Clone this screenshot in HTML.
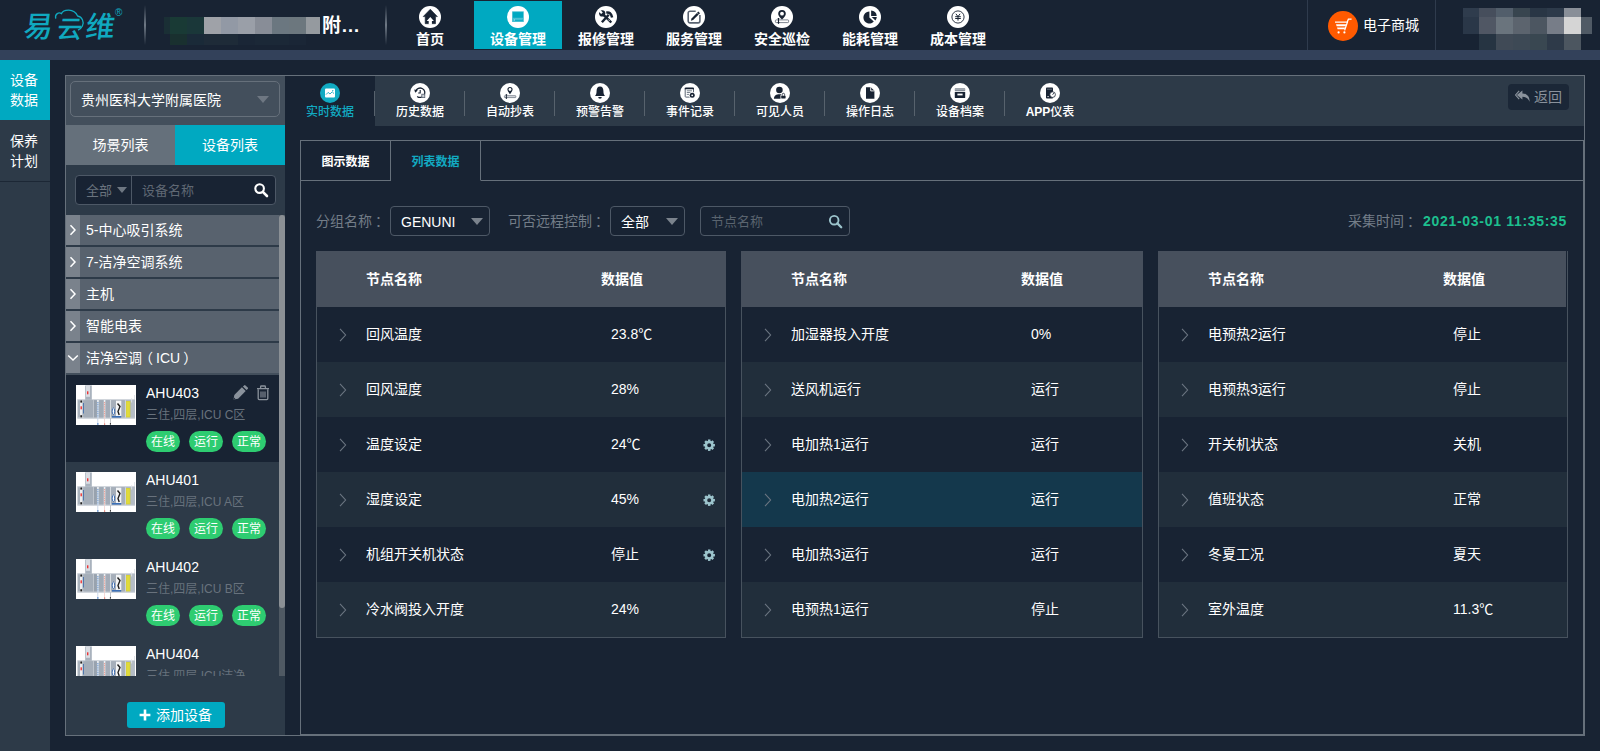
<!DOCTYPE html>
<html lang="zh-CN">
<head>
<meta charset="utf-8">
<title>易云维 - 设备管理</title>
<style>
*{box-sizing:border-box;margin:0;padding:0}
html,body{width:1600px;height:751px;overflow:hidden;background:#182333;}
body{position:relative;font-family:"Liberation Sans","Noto Sans CJK SC",sans-serif;font-size:14px;color:#fff;line-height:1}
.abs{position:absolute}
svg{display:block}
/* header */
#hdr{position:absolute;left:0;top:0;width:1600px;height:50px;background:#182333}
#bar{position:absolute;left:0;top:50px;width:1600px;height:10px;background:#33415a}
.vdiv{position:absolute;top:5px;width:2px;height:40px;background:linear-gradient(to bottom,rgba(90,100,115,0),rgba(120,130,142,.9) 50%,rgba(90,100,115,0))}
.logo{position:absolute;left:25px;top:10px;width:92px;height:32px;color:#10a9c0;font-size:30px;font-weight:500;letter-spacing:-1px;line-height:32px;white-space:nowrap;transform:skewX(-7deg)}
.nav{position:absolute;top:1px;width:88px;height:48px;text-align:center}
.nav.on{background:#00a9c1}
.nav .ic{position:absolute;left:33px;top:5px;width:22px;height:22px;border-radius:50%;background:#fff}
.nav .tx{position:absolute;left:0;top:29px;width:88px;font-size:14px;font-weight:bold;line-height:18px;white-space:nowrap}
.mz{position:absolute}
/* sidebar */
#side{position:absolute;left:0;top:60px;width:50px;height:691px;background:#2d3a48}
.sitem{position:absolute;left:0;width:50px;text-align:center;font-size:14px;line-height:20px;padding-top:10px;padding-right:2px}
/* frame */
#frame{position:absolute;left:65px;top:75px;width:1520px;height:661px;border:1px solid #66707b}

#left{position:absolute;left:66px;top:76px;width:219px;height:659px;background:#2d3a48;overflow:hidden}
#lsel{position:absolute;left:0;top:0;width:219px;height:49px;background:#434f5c}
#lsel .box{position:absolute;left:4px;top:5px;width:210px;height:36px;border:1px solid #66707b;border-radius:5px}
#lsel .t{position:absolute;left:15px;top:15px;font-size:14px;line-height:18px;white-space:nowrap}
.caret{position:absolute;width:0;height:0;border-left:6px solid transparent;border-right:6px solid transparent;border-top:7px solid #6e7782}
.ltab{position:absolute;top:49px;height:40px;width:110px;text-align:center;font-size:14px;line-height:40px}
#lsearch{position:absolute;left:9px;top:99px;width:201px;height:30px;border:1px solid #4d5866;border-radius:4px;background:#182333}
.tree{position:absolute;left:0;width:213px;height:30px;background:#58626e}
.tree .s{position:absolute;left:0;top:0;width:14px;height:30px;background:#7a828c}
.tree .t{position:absolute;left:20px;top:6px;font-size:14px;line-height:18px;white-space:nowrap}
.dev{position:absolute;left:0;width:213px;height:87px}
.dev .th{position:absolute;left:10px;top:10px;width:60px;height:40px;background:#fff}
.dev .n{position:absolute;left:80px;top:9px;font-size:14px;line-height:18px;white-space:nowrap}
.dev .d{position:absolute;left:80px;top:32px;font-size:12px;line-height:16px;color:#68727d;white-space:nowrap}
.bd{position:absolute;top:56px;width:34px;height:21px;border-radius:11px;background:#2ecc71;font-size:12px;line-height:23px;text-align:center;color:#fff}
#addbtn{position:absolute;left:61px;top:626px;width:98px;height:26px;border-radius:3px;background:#00a9c1;font-size:14px;line-height:26px;white-space:nowrap}

#subnav{position:absolute;left:285px;top:76px;width:1299px;height:50px;background:#2d3a48}
.sn{position:absolute;top:0;width:90px;height:50px}
.sn.on{background:#182333}
.sn .ic{position:absolute;left:35px;top:7px;width:20px;height:20px;border-radius:50%;background:#fff}
.sn.on .ic{background:#12aac2}
.sn .tx{position:absolute;left:0;top:28px;width:90px;text-align:center;font-size:12px;font-weight:500;line-height:16px;white-space:nowrap}
.sn.on .tx{color:#12aac2}
.sep{position:absolute;top:15px;width:1px;height:25px;background:#57626d}
#back{position:absolute;left:1223px;top:8px;width:61px;height:26px;border-radius:4px;background:#1b2737;color:#8a929c;font-size:14px;line-height:26px}
#inner{position:absolute;left:300px;top:140px;width:1284px;height:595px;border:1px solid #66707b}
.tab{position:absolute;top:140px;width:91px;height:41px;border:1px solid #66707b;font-size:12px;font-weight:bold;line-height:42px;text-align:center}
.flab{position:absolute;top:212px;font-size:14px;line-height:18px;color:#737d88;white-space:nowrap}
.fsel{position:absolute;top:206px;height:30px;border:1px solid #4d5866;border-radius:4px;font-size:14px;line-height:30px;padding-left:10px;white-space:nowrap}
.tbl{position:absolute;top:251px;height:387px;border:1px solid #47525e;border-top:none}
.tbl .hd{position:absolute;left:-1px;top:0;height:56px;background:#47505d}
.tbl .hd div{position:absolute;top:19px;font-size:14px;font-weight:bold;line-height:18px;white-space:nowrap}
.row{position:absolute;left:0;height:55px}
.row.e{background:#212e3b}
.row.hl{background:#14384c}
.row .n,.row .v{position:absolute;top:18px;font-size:14px;line-height:18px;white-space:nowrap}
.row .a{position:absolute;left:22px;top:20.5px}
.row .g{position:absolute;top:21.500px}

</style>
</head>
<body>
<div id="hdr">
<div class="logo" style="left:24px;top:11px;width:30px;font-size:29px">易</div><div class="logo" style="left:57px;top:15px;width:26px;font-size:25px;line-height:28px">云</div><div class="logo" style="left:86px;top:11px;width:30px;font-size:29px">维</div>
<div class="abs" style="left:115px;top:8px;font-size:10px;color:#10a9c0;line-height:10px">®</div>
<svg class="abs" style="left:50px;top:5px" width="40" height="30" viewBox="50 5 40 30"><path d="M55.700 18.600 C54.600 13.500 59 12 61.500 13.600 C63 9.500 74 7.500 77.600 16 C82 16.500 84.500 22 82.400 26 C81.400 28 80 29.400 78 30.200" fill="none" stroke="#10a9c0" stroke-width="1.300"/></svg>
<div class="vdiv" style="left:144px"></div>
<div class="mz" style="left:164px;top:17px;width:6px;height:17px;background:#1a2f35"></div><div class="mz" style="left:170px;top:17px;width:17px;height:17px;background:#193a35"></div><div class="mz" style="left:187px;top:17px;width:17px;height:17px;background:#1a3739"></div><div class="mz" style="left:204px;top:17px;width:17px;height:17px;background:#9fa2a8"></div><div class="mz" style="left:221px;top:17px;width:17px;height:17px;background:#9299a5"></div><div class="mz" style="left:238px;top:17px;width:17px;height:17px;background:#9a9fa8"></div><div class="mz" style="left:255px;top:17px;width:17px;height:17px;background:#888d97"></div><div class="mz" style="left:272px;top:17px;width:17px;height:17px;background:#6b7780"></div><div class="mz" style="left:289px;top:17px;width:17px;height:17px;background:#6c777e"></div><div class="mz" style="left:306px;top:17px;width:14px;height:17px;background:#959a9f"></div><div class="mz" style="left:170px;top:34px;width:17px;height:11px;background:#19302f"></div><div class="mz" style="left:187px;top:34px;width:17px;height:11px;background:#1a2a38"></div><div class="mz" style="left:204px;top:34px;width:34px;height:11px;background:#1e2b38"></div><div class="mz" style="left:238px;top:34px;width:17px;height:11px;background:#1a2636"></div><div class="mz" style="left:255px;top:34px;width:34px;height:11px;background:#1b2837"></div><div class="mz" style="left:289px;top:34px;width:17px;height:11px;background:#1a2636"></div>
<div class="abs" style="left:322px;top:15px;font-size:19px;font-weight:bold;line-height:22px;white-space:nowrap">附…</div>
<div class="vdiv" style="left:385px"></div>
<div class="nav" style="left:386px"><div class="ic"><svg width="22" height="22" viewBox="0 0 22 22"><path d="M11.300 3.200 L4.200 10.600 H6.200 V17.700 H16.500 V10.600 H18.400 Z" fill="#182333" stroke="#182333" stroke-width=".6" stroke-linejoin="round"/><path d="M11.300 10.900 L7.700 14.900 H9.700 V18.400 H12.900 V14.900 H14.900 Z" fill="#fff"/></svg></div><div class="tx">首页</div></div>
<div class="nav on" style="left:474px"><div class="ic"><svg width="22" height="22" viewBox="0 0 22 22"><rect x="5" y="5.200" width="11.900" height="10.700" rx=".5" fill="#56c4d5"/><rect x="5.900" y="6.100" width="10.100" height="5.700" fill="#00a9c1"/><rect x="5.900" y="12.800" width="10.100" height="2.400" fill="#12aec5"/><rect x="6.700" y="13.200" width=".9" height="1.500" fill="#e6f7fa"/><path d="M8 13.300 H15.600" stroke="#8ad6e2" stroke-width=".5"/></svg></div><div class="tx">设备管理</div></div>
<div class="nav" style="left:562px"><div class="ic"><svg width="22" height="22" viewBox="0 0 22 22"><circle cx="7.200" cy="7.400" r="3.100" fill="#182333"/><path d="M3.400 3.600 L7 7.200" stroke="#fff" stroke-width="2.300"/><g stroke="#182333" fill="none"><path d="M8.600 8.800 L16.300 16.500" stroke-width="2.400"/><path d="M6.900 16.300 L13.700 8.700" stroke-width="2.400"/><path d="M11.300 6.700 Q15.800 5.400 17.100 11.500" stroke-width="2.500"/></g><path d="M13.200 13.400 L14.800 15" stroke="#fff" stroke-width=".7"/></svg></div><div class="tx">报修管理</div></div>
<div class="nav" style="left:650px"><div class="ic"><svg width="22" height="22" viewBox="0 0 22 22"><path d="M12.700 5.200 H7 a1.800 1.800 0 0 0 -1.800 1.800 V15.100 a1.800 1.800 0 0 0 1.800 1.800 H15.100 a1.800 1.800 0 0 0 1.800 -1.800 V8.900" fill="none" stroke="#5a6472" stroke-width="1.600"/><path d="M7.900 14.700 L8.500 12.500 L15.400 5.600 L17 7.200 L10.100 14.100 Z" fill="#182333"/><path d="M14 6.800 L15.800 8.600" stroke="#fff" stroke-width=".5"/></svg></div><div class="tx">服务管理</div></div>
<div class="nav" style="left:738px"><div class="ic"><svg width="22" height="22" viewBox="0 0 22 22"><rect x="4.400" y="13.900" width="13.200" height="2.700" rx=".8" fill="#fff" stroke="#5a6472" stroke-width=".8"/><path d="M11 4.100 A3.800 3.800 0 0 1 14.800 7.900 C14.800 9.700 12.800 11.600 11 13.500 C9.200 11.600 7.200 9.700 7.200 7.900 A3.800 3.800 0 0 1 11 4.100 Z" fill="#182333"/><circle cx="11" cy="7.700" r="1.900" fill="#fff"/><path d="M7.500 12.600 V17.400" stroke="#182333" stroke-width="1.100"/><path d="M6.300 12 H8.700 L7.500 13.500 Z M6.200 16.500 H8.800 L7.500 18 Z" fill="#182333"/></svg></div><div class="tx">安全巡检</div></div>
<div class="nav" style="left:826px"><div class="ic"><svg width="22" height="22" viewBox="0 0 22 22"><path d="M10.400 5.500 A6 6 0 1 0 14.800 15.600 L10.400 11.500 Z" fill="#182333"/><path d="M12.100 4.400 A5.600 5.600 0 0 1 17.700 9.900 H12.100 Z" fill="#182333"/><path d="M12.700 11.100 H17.800 A5.600 5.600 0 0 1 16.400 14.500 Z" fill="#182333"/></svg></div><div class="tx">能耗管理</div></div>
<div class="nav" style="left:914px"><div class="ic"><svg width="22" height="22" viewBox="0 0 22 22"><circle cx="11" cy="11" r="6.1" fill="none" stroke="#182333" stroke-width=".9"/><path d="M8.9 7.8 L11 10.6 L13.1 7.8 M8.2 10.7 H13.8 M8.2 12.5 H13.8 M11 10.6 V14.6" fill="none" stroke="#182333" stroke-width="1"/></svg></div><div class="tx">成本管理</div></div>
<div class="abs" style="left:1307px;top:0;width:1px;height:50px;background:#2f3b4d"></div>
<div class="abs" style="left:1435px;top:0;width:1px;height:50px;background:#2f3b4d"></div>
<div class="abs" style="left:1328px;top:11px;width:30px;height:30px;border-radius:50%;background:#ff5a00"><svg width="30" height="30" viewBox="0 0 30 30"><path d="M7 11.2 H19.2 L20.4 8.2 H23.6" fill="none" stroke="#fff" stroke-width="1.3"/><path d="M8 13.2 H18.4 L17.6 15.2 H8.6 Z M9 16.6 H17.2 L16.6 18.2 H9.6 Z" fill="#fff"/><path d="M19.6 10.6 L16.6 19.4" stroke="#fff" stroke-width="1.3"/><circle cx="10.6" cy="21.4" r="1.1" fill="#fff"/><circle cx="16.4" cy="21.4" r="1.1" fill="#fff"/></svg></div>
<div class="abs" style="left:1363px;top:16px;font-size:14px;line-height:18px;white-space:nowrap">电子商城</div>
<div class="mz" style="left:1463px;top:8px;width:16px;height:9px;background:#2f3c4d"></div><div class="mz" style="left:1479px;top:8px;width:17px;height:9px;background:#464e5c"></div><div class="mz" style="left:1496px;top:8px;width:17px;height:9px;background:#525e6b"></div><div class="mz" style="left:1513px;top:8px;width:17px;height:9px;background:#38454f"></div><div class="mz" style="left:1530px;top:8px;width:17px;height:9px;background:#293645"></div><div class="mz" style="left:1547px;top:8px;width:17px;height:9px;background:#2d3a4a"></div><div class="mz" style="left:1564px;top:8px;width:17px;height:9px;background:#898f98"></div><div class="mz" style="left:1463px;top:17px;width:16px;height:17px;background:#2a3748"></div><div class="mz" style="left:1479px;top:17px;width:17px;height:17px;background:#505764"></div><div class="mz" style="left:1496px;top:17px;width:17px;height:17px;background:#6a747d"></div><div class="mz" style="left:1513px;top:17px;width:17px;height:17px;background:#5c646e"></div><div class="mz" style="left:1530px;top:17px;width:17px;height:17px;background:#4c5661"></div><div class="mz" style="left:1547px;top:17px;width:17px;height:17px;background:#777d88"></div><div class="mz" style="left:1564px;top:17px;width:17px;height:17px;background:#d5d5d5"></div><div class="mz" style="left:1581px;top:17px;width:11px;height:17px;background:#505a65"></div><div class="mz" style="left:1479px;top:34px;width:17px;height:16px;background:#263442"></div><div class="mz" style="left:1496px;top:34px;width:17px;height:16px;background:#404a56"></div><div class="mz" style="left:1513px;top:34px;width:17px;height:16px;background:#3d4955"></div><div class="mz" style="left:1530px;top:34px;width:17px;height:16px;background:#394751"></div><div class="mz" style="left:1547px;top:34px;width:17px;height:16px;background:#2e3a49"></div><div class="mz" style="left:1564px;top:34px;width:17px;height:16px;background:#4c5660"></div>
</div>
<div id="bar"></div>
<div id="side">
<div class="sitem" style="top:0;height:60px;background:#00a9c1">设备<br>数据</div>
<div class="sitem" style="top:60px;height:62px;padding-top:11px;border-bottom:1px solid #1c2735">保养<br>计划</div>
</div>
<div id="frame"></div>
<div id="left">
<div id="lsel"><div class="box"></div><div class="t">贵州医科大学附属医院</div><div class="caret" style="left:191px;top:20px"></div></div>
<div class="ltab" style="left:0;width:109px;background:#65707b">场景列表</div><div class="ltab" style="left:109px;background:#00a9c1">设备列表</div>
<div id="lsearch"><div class="abs" style="left:10px;top:6px;font-size:13px;line-height:18px;color:#6a737e">全部</div><div class="caret" style="left:41px;top:11px;border-left-width:5px;border-right-width:5px;border-top-width:6px"></div><div class="abs" style="left:55px;top:0;width:1px;height:28px;background:#4d5866"></div><div class="abs" style="left:66px;top:6px;font-size:13px;line-height:18px;color:#5f6873">设备名称</div><svg class="abs" style="left:177px;top:6px" width="16" height="16" viewBox="0 0 16 16"><circle cx="6.6" cy="6.6" r="4.3" fill="none" stroke="#fff" stroke-width="2.1"/><path d="M9.8 9.8 L14 14" stroke="#fff" stroke-width="2.6" stroke-linecap="round"/></svg></div>
<div class="tree" style="top:139px"><div class="s"></div><svg class="abs" style="left:3px;top:9px" width="8" height="12" viewBox="0 0 8 12"><path d="M1.5 1.2 L6 6 L1.5 10.8" fill="none" stroke="#fff" stroke-width="1.5"/></svg><div class="t">5-中心吸引系统</div></div>
<div class="tree" style="top:171px"><div class="s"></div><svg class="abs" style="left:3px;top:9px" width="8" height="12" viewBox="0 0 8 12"><path d="M1.5 1.2 L6 6 L1.5 10.8" fill="none" stroke="#fff" stroke-width="1.5"/></svg><div class="t">7-洁净空调系统</div></div>
<div class="tree" style="top:203px"><div class="s"></div><svg class="abs" style="left:3px;top:9px" width="8" height="12" viewBox="0 0 8 12"><path d="M1.5 1.2 L6 6 L1.5 10.8" fill="none" stroke="#fff" stroke-width="1.5"/></svg><div class="t">主机</div></div>
<div class="tree" style="top:235px"><div class="s"></div><svg class="abs" style="left:3px;top:9px" width="8" height="12" viewBox="0 0 8 12"><path d="M1.5 1.2 L6 6 L1.5 10.8" fill="none" stroke="#fff" stroke-width="1.5"/></svg><div class="t">智能电表</div></div>
<div class="tree" style="top:267px"><div class="s"></div><svg class="abs" style="left:1px;top:11px" width="12" height="8" viewBox="0 0 12 8"><path d="M1.2 1.5 L6 6 L10.8 1.5" fill="none" stroke="#fff" stroke-width="1.5"/></svg><div class="t">洁净空调<span style="position:relative;left:-3px">（</span>ICU<span style="position:relative;left:3px">）</span></div></div>
<div class="abs" style="left:0;top:297px;width:213px;height:2px;background:#434f5c"></div>
<div class="abs" style="left:0;top:299px;width:213px;height:301px;overflow:hidden">
<div class="dev" style="top:0px;background:#182333;"><div class="th"><svg width="60" height="40" viewBox="0 0 60 40"><rect width="60" height="40" fill="#fff"/>
<rect x="1.500" y="14.400" width="57.500" height="19" fill="#a9b2bc"/><rect x="1.500" y="14.200" width="57.500" height="1" fill="#d3d8de"/><rect x="1.500" y="32.400" width="57.500" height="1.300" fill="#cdd3da"/>
<rect x="9.200" y=".4" width="6.600" height="14.400" fill="#a9b2bd"/><rect x="10" y=".4" width="4" height="11.400" fill="#d9dde3"/><rect x="11" y="6.300" width="1.400" height="3" fill="#e33"/>
<rect x="4" y="15" width="2.400" height="17.600" fill="#eceef1"/><rect x="4.300" y="15.400" width="1.800" height="2.200" fill="#222"/><rect x="4.300" y="30.200" width="1.800" height="2.200" fill="#222"/><rect x="4.500" y="21.300" width="1.400" height="3" fill="#e33"/>
<rect x="7.200" y="18" width=".8" height="10.500" fill="#3b67a8"/>
<rect x="8.200" y="15.200" width="9" height="17.200" fill="#a5aeb9"/><rect x="17.300" y="15.200" width=".7" height="17.200" fill="#c9cfd6"/><rect x="18" y="15.200" width="2.800" height="17.200" fill="#98a2ae"/>
<rect x="21" y="15" width="1.800" height="18.400" fill="#e6eaee"/><path d="M21.900 17 V32.500" stroke="#3f78c4" stroke-width=".8" stroke-dasharray="1.200 .6"/><rect x="21.500" y="33.400" width=".7" height="6" fill="#b4c6e2"/><rect x="21.200" y="38.300" width="1.300" height="1.400" fill="#3f78c4"/>
<rect x="23.200" y="15.200" width="4.400" height="17.200" fill="#a1abb6"/>
<rect x="27.800" y="15" width="1.600" height="18.400" fill="#eceff2"/><path d="M28.600 17 V32.500" stroke="#e8867a" stroke-width=".8" stroke-dasharray="1.200 .6"/><rect x="28.300" y="33.400" width=".6" height="6" fill="#f0c0ba"/><rect x="28" y="38.500" width="1.200" height="1.200" fill="#e06a5c"/>
<rect x="29.800" y="15.200" width="4" height="17.200" fill="#a3acb8"/><rect x="34" y="15" width=".8" height="18.400" fill="#e2e6ea"/><rect x="34.100" y="33.400" width=".6" height="6" fill="#9aa0a8"/><rect x="33.900" y="38" width="1" height="1.700" fill="#333"/>
<rect x="35.200" y="15.200" width="13.400" height="17.200" fill="#a6afba"/>
<rect x="40" y="15.700" width="5.300" height="15.300" fill="#f4f5f6"/><path d="M41.500 18.500 L44 21.500 L42 26.500 L43.200 30" stroke="#222" stroke-width="1.400" fill="none"/>
<ellipse cx="37.400" cy="26.300" rx="1.200" ry="3.300" fill="#fff" stroke="#2f62ad" stroke-width=".9"/><rect x="36" y="31" width="9.200" height="1.600" fill="#3b6fb6"/>
<rect x="49" y="15.200" width=".9" height="17.200" fill="#d3d8de"/>
<rect x="50" y="16" width="4.400" height="16.400" fill="#d6d13a"/><rect x="50.600" y="17" width="3" height="14.400" fill="#e0da3c"/>
<rect x="54.800" y="15.200" width="4.200" height="17.200" fill="#b4bcc5"/><rect x="55.300" y="13" width=".8" height="4.500" fill="#e4e7eb"/><rect x="58.200" y="10" width=".5" height="5" fill="#c5cbd2"/>
</svg></div><div class="n">AHU403</div><div class="d">三住,四层,ICU C区</div><svg class="abs" style="left:167px;top:10px" width="16" height="15" viewBox="0 0 16 15"><path d="M.5 14.500 L1.300 9.900 L8.900 2.300 L12.700 6.100 L5.100 13.700 Z" fill="#8a929c"/><path d="M9.900 1.500 L11.100 .4 a1 1 0 0 1 1.400 0 L14.700 2.500 a1 1 0 0 1 0 1.400 L13.500 5.100 Z" fill="#8a929c"/><path d="M.5 14.500 L2.500 14 L1 12.500 Z" fill="#182333"/></svg><svg class="abs" style="left:190px;top:10px" width="14" height="16" viewBox="0 0 14 16"><path d="M1 3.6 H13 M4.6 3.4 V1.8 a.8 .8 0 0 1 .8 -.8 H8.6 a.8 .8 0 0 1 .8 .8 V3.4" fill="none" stroke="#8a929c" stroke-width="1.3"/><path d="M2.2 4.2 V13.6 a1 1 0 0 0 1 1 H10.8 a1 1 0 0 0 1 -1 V4.2" fill="none" stroke="#8a929c" stroke-width="1.3"/><path d="M5 6.4 V12.4 M7 6.4 V12.4 M9 6.4 V12.4" stroke="#8a929c" stroke-width="1.1"/></svg><div class="bd" style="left:80px">在线</div><div class="bd" style="left:123px">运行</div><div class="bd" style="left:166px">正常</div></div>
<div class="dev" style="top:87px;"><div class="th"><svg width="60" height="40" viewBox="0 0 60 40"><rect width="60" height="40" fill="#fff"/>
<rect x="1.500" y="14.400" width="57.500" height="19" fill="#a9b2bc"/><rect x="1.500" y="14.200" width="57.500" height="1" fill="#d3d8de"/><rect x="1.500" y="32.400" width="57.500" height="1.300" fill="#cdd3da"/>
<rect x="9.200" y=".4" width="6.600" height="14.400" fill="#a9b2bd"/><rect x="10" y=".4" width="4" height="11.400" fill="#d9dde3"/><rect x="11" y="6.300" width="1.400" height="3" fill="#e33"/>
<rect x="4" y="15" width="2.400" height="17.600" fill="#eceef1"/><rect x="4.300" y="15.400" width="1.800" height="2.200" fill="#222"/><rect x="4.300" y="30.200" width="1.800" height="2.200" fill="#222"/><rect x="4.500" y="21.300" width="1.400" height="3" fill="#e33"/>
<rect x="7.200" y="18" width=".8" height="10.500" fill="#3b67a8"/>
<rect x="8.200" y="15.200" width="9" height="17.200" fill="#a5aeb9"/><rect x="17.300" y="15.200" width=".7" height="17.200" fill="#c9cfd6"/><rect x="18" y="15.200" width="2.800" height="17.200" fill="#98a2ae"/>
<rect x="21" y="15" width="1.800" height="18.400" fill="#e6eaee"/><path d="M21.900 17 V32.500" stroke="#3f78c4" stroke-width=".8" stroke-dasharray="1.200 .6"/><rect x="21.500" y="33.400" width=".7" height="6" fill="#b4c6e2"/><rect x="21.200" y="38.300" width="1.300" height="1.400" fill="#3f78c4"/>
<rect x="23.200" y="15.200" width="4.400" height="17.200" fill="#a1abb6"/>
<rect x="27.800" y="15" width="1.600" height="18.400" fill="#eceff2"/><path d="M28.600 17 V32.500" stroke="#e8867a" stroke-width=".8" stroke-dasharray="1.200 .6"/><rect x="28.300" y="33.400" width=".6" height="6" fill="#f0c0ba"/><rect x="28" y="38.500" width="1.200" height="1.200" fill="#e06a5c"/>
<rect x="29.800" y="15.200" width="4" height="17.200" fill="#a3acb8"/><rect x="34" y="15" width=".8" height="18.400" fill="#e2e6ea"/><rect x="34.100" y="33.400" width=".6" height="6" fill="#9aa0a8"/><rect x="33.900" y="38" width="1" height="1.700" fill="#333"/>
<rect x="35.200" y="15.200" width="13.400" height="17.200" fill="#a6afba"/>
<rect x="40" y="15.700" width="5.300" height="15.300" fill="#f4f5f6"/><path d="M41.500 18.500 L44 21.500 L42 26.500 L43.200 30" stroke="#222" stroke-width="1.400" fill="none"/>
<ellipse cx="37.400" cy="26.300" rx="1.200" ry="3.300" fill="#fff" stroke="#2f62ad" stroke-width=".9"/><rect x="36" y="31" width="9.200" height="1.600" fill="#3b6fb6"/>
<rect x="49" y="15.200" width=".9" height="17.200" fill="#d3d8de"/>
<rect x="50" y="16" width="4.400" height="16.400" fill="#d6d13a"/><rect x="50.600" y="17" width="3" height="14.400" fill="#e0da3c"/>
<rect x="54.800" y="15.200" width="4.200" height="17.200" fill="#b4bcc5"/><rect x="55.300" y="13" width=".8" height="4.500" fill="#e4e7eb"/><rect x="58.200" y="10" width=".5" height="5" fill="#c5cbd2"/>
</svg></div><div class="n">AHU401</div><div class="d">三住,四层,ICU A区</div><div class="bd" style="left:80px">在线</div><div class="bd" style="left:123px">运行</div><div class="bd" style="left:166px">正常</div></div>
<div class="dev" style="top:174px;"><div class="th"><svg width="60" height="40" viewBox="0 0 60 40"><rect width="60" height="40" fill="#fff"/>
<rect x="1.500" y="14.400" width="57.500" height="19" fill="#a9b2bc"/><rect x="1.500" y="14.200" width="57.500" height="1" fill="#d3d8de"/><rect x="1.500" y="32.400" width="57.500" height="1.300" fill="#cdd3da"/>
<rect x="9.200" y=".4" width="6.600" height="14.400" fill="#a9b2bd"/><rect x="10" y=".4" width="4" height="11.400" fill="#d9dde3"/><rect x="11" y="6.300" width="1.400" height="3" fill="#e33"/>
<rect x="4" y="15" width="2.400" height="17.600" fill="#eceef1"/><rect x="4.300" y="15.400" width="1.800" height="2.200" fill="#222"/><rect x="4.300" y="30.200" width="1.800" height="2.200" fill="#222"/><rect x="4.500" y="21.300" width="1.400" height="3" fill="#e33"/>
<rect x="7.200" y="18" width=".8" height="10.500" fill="#3b67a8"/>
<rect x="8.200" y="15.200" width="9" height="17.200" fill="#a5aeb9"/><rect x="17.300" y="15.200" width=".7" height="17.200" fill="#c9cfd6"/><rect x="18" y="15.200" width="2.800" height="17.200" fill="#98a2ae"/>
<rect x="21" y="15" width="1.800" height="18.400" fill="#e6eaee"/><path d="M21.900 17 V32.500" stroke="#3f78c4" stroke-width=".8" stroke-dasharray="1.200 .6"/><rect x="21.500" y="33.400" width=".7" height="6" fill="#b4c6e2"/><rect x="21.200" y="38.300" width="1.300" height="1.400" fill="#3f78c4"/>
<rect x="23.200" y="15.200" width="4.400" height="17.200" fill="#a1abb6"/>
<rect x="27.800" y="15" width="1.600" height="18.400" fill="#eceff2"/><path d="M28.600 17 V32.500" stroke="#e8867a" stroke-width=".8" stroke-dasharray="1.200 .6"/><rect x="28.300" y="33.400" width=".6" height="6" fill="#f0c0ba"/><rect x="28" y="38.500" width="1.200" height="1.200" fill="#e06a5c"/>
<rect x="29.800" y="15.200" width="4" height="17.200" fill="#a3acb8"/><rect x="34" y="15" width=".8" height="18.400" fill="#e2e6ea"/><rect x="34.100" y="33.400" width=".6" height="6" fill="#9aa0a8"/><rect x="33.900" y="38" width="1" height="1.700" fill="#333"/>
<rect x="35.200" y="15.200" width="13.400" height="17.200" fill="#a6afba"/>
<rect x="40" y="15.700" width="5.300" height="15.300" fill="#f4f5f6"/><path d="M41.500 18.500 L44 21.500 L42 26.500 L43.200 30" stroke="#222" stroke-width="1.400" fill="none"/>
<ellipse cx="37.400" cy="26.300" rx="1.200" ry="3.300" fill="#fff" stroke="#2f62ad" stroke-width=".9"/><rect x="36" y="31" width="9.200" height="1.600" fill="#3b6fb6"/>
<rect x="49" y="15.200" width=".9" height="17.200" fill="#d3d8de"/>
<rect x="50" y="16" width="4.400" height="16.400" fill="#d6d13a"/><rect x="50.600" y="17" width="3" height="14.400" fill="#e0da3c"/>
<rect x="54.800" y="15.200" width="4.200" height="17.200" fill="#b4bcc5"/><rect x="55.300" y="13" width=".8" height="4.500" fill="#e4e7eb"/><rect x="58.200" y="10" width=".5" height="5" fill="#c5cbd2"/>
</svg></div><div class="n">AHU402</div><div class="d">三住,四层,ICU B区</div><div class="bd" style="left:80px">在线</div><div class="bd" style="left:123px">运行</div><div class="bd" style="left:166px">正常</div></div>
<div class="dev" style="top:261px;"><div class="th"><svg width="60" height="40" viewBox="0 0 60 40"><rect width="60" height="40" fill="#fff"/>
<rect x="1.500" y="14.400" width="57.500" height="19" fill="#a9b2bc"/><rect x="1.500" y="14.200" width="57.500" height="1" fill="#d3d8de"/><rect x="1.500" y="32.400" width="57.500" height="1.300" fill="#cdd3da"/>
<rect x="9.200" y=".4" width="6.600" height="14.400" fill="#a9b2bd"/><rect x="10" y=".4" width="4" height="11.400" fill="#d9dde3"/><rect x="11" y="6.300" width="1.400" height="3" fill="#e33"/>
<rect x="4" y="15" width="2.400" height="17.600" fill="#eceef1"/><rect x="4.300" y="15.400" width="1.800" height="2.200" fill="#222"/><rect x="4.300" y="30.200" width="1.800" height="2.200" fill="#222"/><rect x="4.500" y="21.300" width="1.400" height="3" fill="#e33"/>
<rect x="7.200" y="18" width=".8" height="10.500" fill="#3b67a8"/>
<rect x="8.200" y="15.200" width="9" height="17.200" fill="#a5aeb9"/><rect x="17.300" y="15.200" width=".7" height="17.200" fill="#c9cfd6"/><rect x="18" y="15.200" width="2.800" height="17.200" fill="#98a2ae"/>
<rect x="21" y="15" width="1.800" height="18.400" fill="#e6eaee"/><path d="M21.900 17 V32.500" stroke="#3f78c4" stroke-width=".8" stroke-dasharray="1.200 .6"/><rect x="21.500" y="33.400" width=".7" height="6" fill="#b4c6e2"/><rect x="21.200" y="38.300" width="1.300" height="1.400" fill="#3f78c4"/>
<rect x="23.200" y="15.200" width="4.400" height="17.200" fill="#a1abb6"/>
<rect x="27.800" y="15" width="1.600" height="18.400" fill="#eceff2"/><path d="M28.600 17 V32.500" stroke="#e8867a" stroke-width=".8" stroke-dasharray="1.200 .6"/><rect x="28.300" y="33.400" width=".6" height="6" fill="#f0c0ba"/><rect x="28" y="38.500" width="1.200" height="1.200" fill="#e06a5c"/>
<rect x="29.800" y="15.200" width="4" height="17.200" fill="#a3acb8"/><rect x="34" y="15" width=".8" height="18.400" fill="#e2e6ea"/><rect x="34.100" y="33.400" width=".6" height="6" fill="#9aa0a8"/><rect x="33.900" y="38" width="1" height="1.700" fill="#333"/>
<rect x="35.200" y="15.200" width="13.400" height="17.200" fill="#a6afba"/>
<rect x="40" y="15.700" width="5.300" height="15.300" fill="#f4f5f6"/><path d="M41.500 18.500 L44 21.500 L42 26.500 L43.200 30" stroke="#222" stroke-width="1.400" fill="none"/>
<ellipse cx="37.400" cy="26.300" rx="1.200" ry="3.300" fill="#fff" stroke="#2f62ad" stroke-width=".9"/><rect x="36" y="31" width="9.200" height="1.600" fill="#3b6fb6"/>
<rect x="49" y="15.200" width=".9" height="17.200" fill="#d3d8de"/>
<rect x="50" y="16" width="4.400" height="16.400" fill="#d6d13a"/><rect x="50.600" y="17" width="3" height="14.400" fill="#e0da3c"/>
<rect x="54.800" y="15.200" width="4.200" height="17.200" fill="#b4bcc5"/><rect x="55.300" y="13" width=".8" height="4.500" fill="#e4e7eb"/><rect x="58.200" y="10" width=".5" height="5" fill="#c5cbd2"/>
</svg></div><div class="n">AHU404</div><div class="d">三住,四层,ICU洁净</div><div class="bd" style="left:80px">在线</div><div class="bd" style="left:123px">运行</div><div class="bd" style="left:166px">正常</div></div>
</div>
<div class="abs" style="left:213px;top:139px;width:6px;height:461px;background:#4f5963"></div><div class="abs" style="left:213px;top:139px;width:6px;height:393px;background:#8b9095;border-radius:3px"></div>
<div id="addbtn"><svg class="abs" style="left:12px;top:7px" width="12" height="12" viewBox="0 0 12 12"><path d="M6 .6 V11.4 M.6 6 H11.4" stroke="#fff" stroke-width="2.6"/></svg><span class="abs" style="left:29px;top:0">添加设备</span></div>
</div>
<div id="subnav">
<div class="sn on" style="left:0px"><div class="ic"><svg width="20" height="20" viewBox="0 0 20 20"><rect x="5" y="5.6" width="10" height="8.8" rx="1" fill="#fff"/><path d="M6 11.6 L8.2 9.4 L10 11 L12.2 8.8 L14 10.6" fill="none" stroke="#12aac2" stroke-width=".9"/><circle cx="12.8" cy="7.6" r=".7" fill="#12aac2"/></svg></div><div class="tx">实时数据</div></div><div class="sep" style="left:89px"></div>
<div class="sn" style="left:90px"><div class="ic"><svg width="20" height="20" viewBox="0 0 20 20"><path d="M5.700 8.200 A4.700 4.700 0 1 1 7.200 13.400" fill="none" stroke="#182333" stroke-width="1.300"/><path d="M4.200 6.400 L7.800 7.200 L5.200 9.800 Z" fill="#182333"/><path d="M10.200 7 V10 H8.200" fill="none" stroke="#182333" stroke-width="1.100"/><rect x="11.800" y="11.200" width="3" height="3.400" fill="#c9ced4" stroke="#5a6472" stroke-width=".8"/></svg></div><div class="tx">历史数据</div></div><div class="sep" style="left:179px"></div>
<div class="sn" style="left:180px"><div class="ic"><svg width="20" height="20" viewBox="0 0 20 20"><rect x="4.400" y="12.700" width="11.400" height="1.900" rx=".5" fill="#dfe2e6" stroke="#5a6472" stroke-width=".7"/><path d="M10 4 A2.600 2.600 0 0 1 12.600 6.600 C12.600 8 11.200 9.600 10 11.200 C8.800 9.600 7.400 8 7.400 6.600 A2.600 2.600 0 0 1 10 4 Z" fill="#182333"/><circle cx="10" cy="6.500" r="1.400" fill="#fff"/><path d="M6.400 11.600 V15.600" stroke="#182333" stroke-width=".9"/><path d="M5.400 11.200 H7.400 L6.400 12.500 Z M5.400 14.800 H7.400 L6.400 16 Z" fill="#182333"/></svg></div><div class="tx">自动抄表</div></div><div class="sep" style="left:269px"></div>
<div class="sn" style="left:270px"><div class="ic"><svg width="20" height="20" viewBox="0 0 20 20"><path d="M10 3.400 c-2.400 0 -3.400 2 -3.400 4.400 c0 2.600 -.5 4 -1.600 5.200 H15 c-1.100 -1.200 -1.600 -2.600 -1.600 -5.200 c0 -2.400 -1 -4.400 -3.400 -4.400 z" fill="#182333"/><path d="M8.2 14 a1.800 1.800 0 0 0 3.600 0 z" fill="#182333"/></svg></div><div class="tx">预警告警</div></div><div class="sep" style="left:359px"></div>
<div class="sn" style="left:360px"><div class="ic"><svg width="20" height="20" viewBox="0 0 20 20"><rect x="5.200" y="5" width="8.300" height="9.100" rx=".6" fill="#fff" stroke="#5a6472" stroke-width="1"/><path d="M4.800 5.500 H13.900" stroke="#182333" stroke-width="1.500"/><path d="M6.800 7.800 H12 M6.800 9.500 H11.400 M6.800 11.400 H9.400" stroke="#6a7480" stroke-width=".9"/><circle cx="12.200" cy="12.300" r="3.200" fill="#fff"/><circle cx="12.200" cy="12.300" r="2.500" fill="#182333"/><circle cx="12.200" cy="12.300" r=".9" fill="#fff"/></svg></div><div class="tx">事件记录</div></div><div class="sep" style="left:449px"></div>
<div class="sn" style="left:450px"><div class="ic"><svg width="20" height="20" viewBox="0 0 20 20"><circle cx="9.400" cy="7" r="3.300" fill="#182333"/><path d="M3.900 15.800 c0 -3.200 2.400 -4.600 5.500 -4.600 s5.500 1.400 5.500 4.600 z" fill="#182333"/><rect x="10.500" y="12" width="5.700" height="4.100" fill="#fff"/><path d="M12.200 12.800 V11.500 a1.200 1.200 0 0 1 2.400 0 V12.800" fill="none" stroke="#fff" stroke-width="2.200"/><path d="M12.200 12.800 V11.500 a1.200 1.200 0 0 1 2.400 0 V12.800" fill="none" stroke="#182333" stroke-width=".8"/><rect x="11.200" y="12.700" width="4.400" height="2.800" rx=".4" fill="#182333"/></svg></div><div class="tx">可见人员</div></div><div class="sep" style="left:539px"></div>
<div class="sn" style="left:540px"><div class="ic"><svg width="20" height="20" viewBox="0 0 20 20"><path d="M6 4.200 H10.800 L14.400 7.800 V15.800 H6 Z" fill="#182333"/><path d="M10.700 4.200 V7.900 H14.400" fill="none" stroke="#fff" stroke-width=".9"/></svg></div><div class="tx">操作日志</div></div><div class="sep" style="left:629px"></div>
<div class="sn" style="left:630px"><div class="ic"><svg width="20" height="20" viewBox="0 0 20 20"><rect x="4.800" y="5.200" width="10.400" height="3" rx=".6" fill="#7d8691"/><path d="M4.800 6.700 H15.200" stroke="#d5d9de" stroke-width=".5"/><rect x="4.800" y="9" width="10.400" height="6" rx=".6" fill="#182333"/><rect x="7.400" y="10.600" width="5.200" height="1.800" fill="#fff"/></svg></div><div class="tx">设备档案</div></div><div class="sep" style="left:719px"></div>
<div class="sn" style="left:720px"><div class="ic"><svg width="20" height="20" viewBox="0 0 20 20"><rect x="6" y="4.600" width="7" height="11" rx=".8" fill="#182333"/><rect x="7" y="5.600" width="5" height="1.400" fill="#4e5866"/><circle cx="12.600" cy="11.600" r="2.800" fill="#fff" stroke="#182333" stroke-width=".8"/><path d="M12.600 11.800 L13.800 10" stroke="#182333" stroke-width=".8"/><path d="M7.200 13.600 H9" stroke="#fff" stroke-width=".7"/></svg></div><div class="tx"><b>APP</b>仪表</div></div>
<div id="back"><svg class="abs" style="left:7px;top:6px" width="17" height="13" viewBox="0 0 17 13"><path d="M7.400 .6 L1.800 5 L7.400 9.400 V6.800 C11 6.800 13.400 8.200 14.600 11.800 C14.800 6.600 11.800 3.600 7.400 3.400 Z" fill="#8a929c"/><path d="M4.200 .8 L.6 5 L4.200 9.200" fill="none" stroke="#8a929c" stroke-width="1.100"/></svg><span class="abs" style="left:26px;top:0">返回</span></div>
</div>
<div id="inner"></div>
<div class="tab" style="left:300px">图示数据</div><div class="tab" style="left:390px;color:#12aac2;border-bottom-color:transparent">列表数据</div><div class="abs" style="left:481px;top:180px;width:1103px;height:1px;background:#66707b"></div>
<div class="flab" style="left:316px">分组名称<span style="margin-left:3px">：</span></div><div class="fsel" style="left:390px;width:100px">GENUNI<div class="caret" style="left:80px;top:11px;border-top-color:#7b838d"></div></div>
<div class="flab" style="left:508px">可否远程控制<span style="margin-left:3px">：</span></div><div class="fsel" style="left:610px;width:75px">全部<div class="caret" style="left:55px;top:11px;border-top-color:#7b838d"></div></div>
<div class="fsel" style="left:700px;width:150px;color:#5a646f;font-size:13px">节点名称<svg class="abs" style="left:127px;top:7px" width="15" height="15" viewBox="0 0 15 15"><circle cx="6.200" cy="6.200" r="4.300" fill="none" stroke="#9cc4cc" stroke-width="1.900"/><path d="M9.400 9.400 L13.200 13.200" stroke="#9cc4cc" stroke-width="2.300" stroke-linecap="round"/></svg></div>
<div class="flab" style="left:1348px">采集时间<span style="margin-left:3px">：</span></div><div class="abs" style="left:1423px;top:212px;font-size:14px;font-weight:bold;line-height:18px;color:#1dbf8e;letter-spacing:.7px;white-space:nowrap">2021-03-01 11:35:35</div>
<div class="tbl" style="left:316px;width:410px"><div class="hd" style="width:410px"><div style="left:50px">节点名称</div><div style="left:285px">数据值</div></div>
<div class="row" style="top:56px;width:408px"><svg class="a" width="8" height="14" viewBox="0 0 8 14"><path d="M1 .8 L6.600 7 L1 13.200" fill="none" stroke="#6c7682" stroke-width="1.100"/></svg><div class="n" style="left:49px">回风温度</div><div class="v" style="left:294px">23.8℃</div></div>
<div class="row e" style="top:111px;width:408px"><svg class="a" width="8" height="14" viewBox="0 0 8 14"><path d="M1 .8 L6.600 7 L1 13.200" fill="none" stroke="#6c7682" stroke-width="1.100"/></svg><div class="n" style="left:49px">回风湿度</div><div class="v" style="left:294px">28%</div></div>
<div class="row" style="top:166px;width:408px"><svg class="a" width="8" height="14" viewBox="0 0 8 14"><path d="M1 .8 L6.600 7 L1 13.200" fill="none" stroke="#6c7682" stroke-width="1.100"/></svg><div class="n" style="left:49px">温度设定</div><div class="v" style="left:294px">24℃</div><svg class="g" style="left:386px" width="12.4" height="12.4" viewBox="-6.500 -6.500 13 13"><g fill="#9cc4cc"><rect x="-1.300" y="-6" width="2.600" height="3" transform="rotate(0)"/><rect x="-1.300" y="-6" width="2.600" height="3" transform="rotate(45)"/><rect x="-1.300" y="-6" width="2.600" height="3" transform="rotate(90)"/><rect x="-1.300" y="-6" width="2.600" height="3" transform="rotate(135)"/><rect x="-1.300" y="-6" width="2.600" height="3" transform="rotate(180)"/><rect x="-1.300" y="-6" width="2.600" height="3" transform="rotate(225)"/><rect x="-1.300" y="-6" width="2.600" height="3" transform="rotate(270)"/><rect x="-1.300" y="-6" width="2.600" height="3" transform="rotate(315)"/></g><circle r="3.400" fill="none" stroke="#9cc4cc" stroke-width="2.600"/></svg></div>
<div class="row e" style="top:221px;width:408px"><svg class="a" width="8" height="14" viewBox="0 0 8 14"><path d="M1 .8 L6.600 7 L1 13.200" fill="none" stroke="#6c7682" stroke-width="1.100"/></svg><div class="n" style="left:49px">湿度设定</div><div class="v" style="left:294px">45%</div><svg class="g" style="left:386px" width="12.4" height="12.4" viewBox="-6.500 -6.500 13 13"><g fill="#9cc4cc"><rect x="-1.300" y="-6" width="2.600" height="3" transform="rotate(0)"/><rect x="-1.300" y="-6" width="2.600" height="3" transform="rotate(45)"/><rect x="-1.300" y="-6" width="2.600" height="3" transform="rotate(90)"/><rect x="-1.300" y="-6" width="2.600" height="3" transform="rotate(135)"/><rect x="-1.300" y="-6" width="2.600" height="3" transform="rotate(180)"/><rect x="-1.300" y="-6" width="2.600" height="3" transform="rotate(225)"/><rect x="-1.300" y="-6" width="2.600" height="3" transform="rotate(270)"/><rect x="-1.300" y="-6" width="2.600" height="3" transform="rotate(315)"/></g><circle r="3.400" fill="none" stroke="#9cc4cc" stroke-width="2.600"/></svg></div>
<div class="row" style="top:276px;width:408px"><svg class="a" width="8" height="14" viewBox="0 0 8 14"><path d="M1 .8 L6.600 7 L1 13.200" fill="none" stroke="#6c7682" stroke-width="1.100"/></svg><div class="n" style="left:49px">机组开关机状态</div><div class="v" style="left:294px">停止</div><svg class="g" style="left:386px" width="12.4" height="12.4" viewBox="-6.500 -6.500 13 13"><g fill="#9cc4cc"><rect x="-1.300" y="-6" width="2.600" height="3" transform="rotate(0)"/><rect x="-1.300" y="-6" width="2.600" height="3" transform="rotate(45)"/><rect x="-1.300" y="-6" width="2.600" height="3" transform="rotate(90)"/><rect x="-1.300" y="-6" width="2.600" height="3" transform="rotate(135)"/><rect x="-1.300" y="-6" width="2.600" height="3" transform="rotate(180)"/><rect x="-1.300" y="-6" width="2.600" height="3" transform="rotate(225)"/><rect x="-1.300" y="-6" width="2.600" height="3" transform="rotate(270)"/><rect x="-1.300" y="-6" width="2.600" height="3" transform="rotate(315)"/></g><circle r="3.400" fill="none" stroke="#9cc4cc" stroke-width="2.600"/></svg></div>
<div class="row e" style="top:331px;width:408px"><svg class="a" width="8" height="14" viewBox="0 0 8 14"><path d="M1 .8 L6.600 7 L1 13.200" fill="none" stroke="#6c7682" stroke-width="1.100"/></svg><div class="n" style="left:49px">冷水阀投入开度</div><div class="v" style="left:294px">24%</div></div>
</div>
<div class="tbl" style="left:741px;width:402px"><div class="hd" style="width:402px"><div style="left:50px">节点名称</div><div style="left:280px">数据值</div></div>
<div class="row" style="top:56px;width:400px"><svg class="a" width="8" height="14" viewBox="0 0 8 14"><path d="M1 .8 L6.600 7 L1 13.200" fill="none" stroke="#6c7682" stroke-width="1.100"/></svg><div class="n" style="left:49px">加湿器投入开度</div><div class="v" style="left:289px">0%</div></div>
<div class="row e" style="top:111px;width:400px"><svg class="a" width="8" height="14" viewBox="0 0 8 14"><path d="M1 .8 L6.600 7 L1 13.200" fill="none" stroke="#6c7682" stroke-width="1.100"/></svg><div class="n" style="left:49px">送风机运行</div><div class="v" style="left:289px">运行</div></div>
<div class="row" style="top:166px;width:400px"><svg class="a" width="8" height="14" viewBox="0 0 8 14"><path d="M1 .8 L6.600 7 L1 13.200" fill="none" stroke="#6c7682" stroke-width="1.100"/></svg><div class="n" style="left:49px">电加热1运行</div><div class="v" style="left:289px">运行</div></div>
<div class="row e hl" style="top:221px;width:400px"><svg class="a" width="8" height="14" viewBox="0 0 8 14"><path d="M1 .8 L6.600 7 L1 13.200" fill="none" stroke="#6c7682" stroke-width="1.100"/></svg><div class="n" style="left:49px">电加热2运行</div><div class="v" style="left:289px">运行</div></div>
<div class="row" style="top:276px;width:400px"><svg class="a" width="8" height="14" viewBox="0 0 8 14"><path d="M1 .8 L6.600 7 L1 13.200" fill="none" stroke="#6c7682" stroke-width="1.100"/></svg><div class="n" style="left:49px">电加热3运行</div><div class="v" style="left:289px">运行</div></div>
<div class="row e" style="top:331px;width:400px"><svg class="a" width="8" height="14" viewBox="0 0 8 14"><path d="M1 .8 L6.600 7 L1 13.200" fill="none" stroke="#6c7682" stroke-width="1.100"/></svg><div class="n" style="left:49px">电预热1运行</div><div class="v" style="left:289px">停止</div></div>
</div>
<div class="tbl" style="left:1158px;width:410px"><div class="hd" style="width:408px"><div style="left:50px">节点名称</div><div style="left:285px">数据值</div></div>
<div class="row" style="top:56px;width:408px"><svg class="a" width="8" height="14" viewBox="0 0 8 14"><path d="M1 .8 L6.600 7 L1 13.200" fill="none" stroke="#6c7682" stroke-width="1.100"/></svg><div class="n" style="left:49px">电预热2运行</div><div class="v" style="left:294px">停止</div></div>
<div class="row e" style="top:111px;width:408px"><svg class="a" width="8" height="14" viewBox="0 0 8 14"><path d="M1 .8 L6.600 7 L1 13.200" fill="none" stroke="#6c7682" stroke-width="1.100"/></svg><div class="n" style="left:49px">电预热3运行</div><div class="v" style="left:294px">停止</div></div>
<div class="row" style="top:166px;width:408px"><svg class="a" width="8" height="14" viewBox="0 0 8 14"><path d="M1 .8 L6.600 7 L1 13.200" fill="none" stroke="#6c7682" stroke-width="1.100"/></svg><div class="n" style="left:49px">开关机状态</div><div class="v" style="left:294px">关机</div></div>
<div class="row e" style="top:221px;width:408px"><svg class="a" width="8" height="14" viewBox="0 0 8 14"><path d="M1 .8 L6.600 7 L1 13.200" fill="none" stroke="#6c7682" stroke-width="1.100"/></svg><div class="n" style="left:49px">值班状态</div><div class="v" style="left:294px">正常</div></div>
<div class="row" style="top:276px;width:408px"><svg class="a" width="8" height="14" viewBox="0 0 8 14"><path d="M1 .8 L6.600 7 L1 13.200" fill="none" stroke="#6c7682" stroke-width="1.100"/></svg><div class="n" style="left:49px">冬夏工况</div><div class="v" style="left:294px">夏天</div></div>
<div class="row e" style="top:331px;width:408px"><svg class="a" width="8" height="14" viewBox="0 0 8 14"><path d="M1 .8 L6.600 7 L1 13.200" fill="none" stroke="#6c7682" stroke-width="1.100"/></svg><div class="n" style="left:49px">室外温度</div><div class="v" style="left:294px">11.3℃</div></div>
</div>
</body>
</html>
